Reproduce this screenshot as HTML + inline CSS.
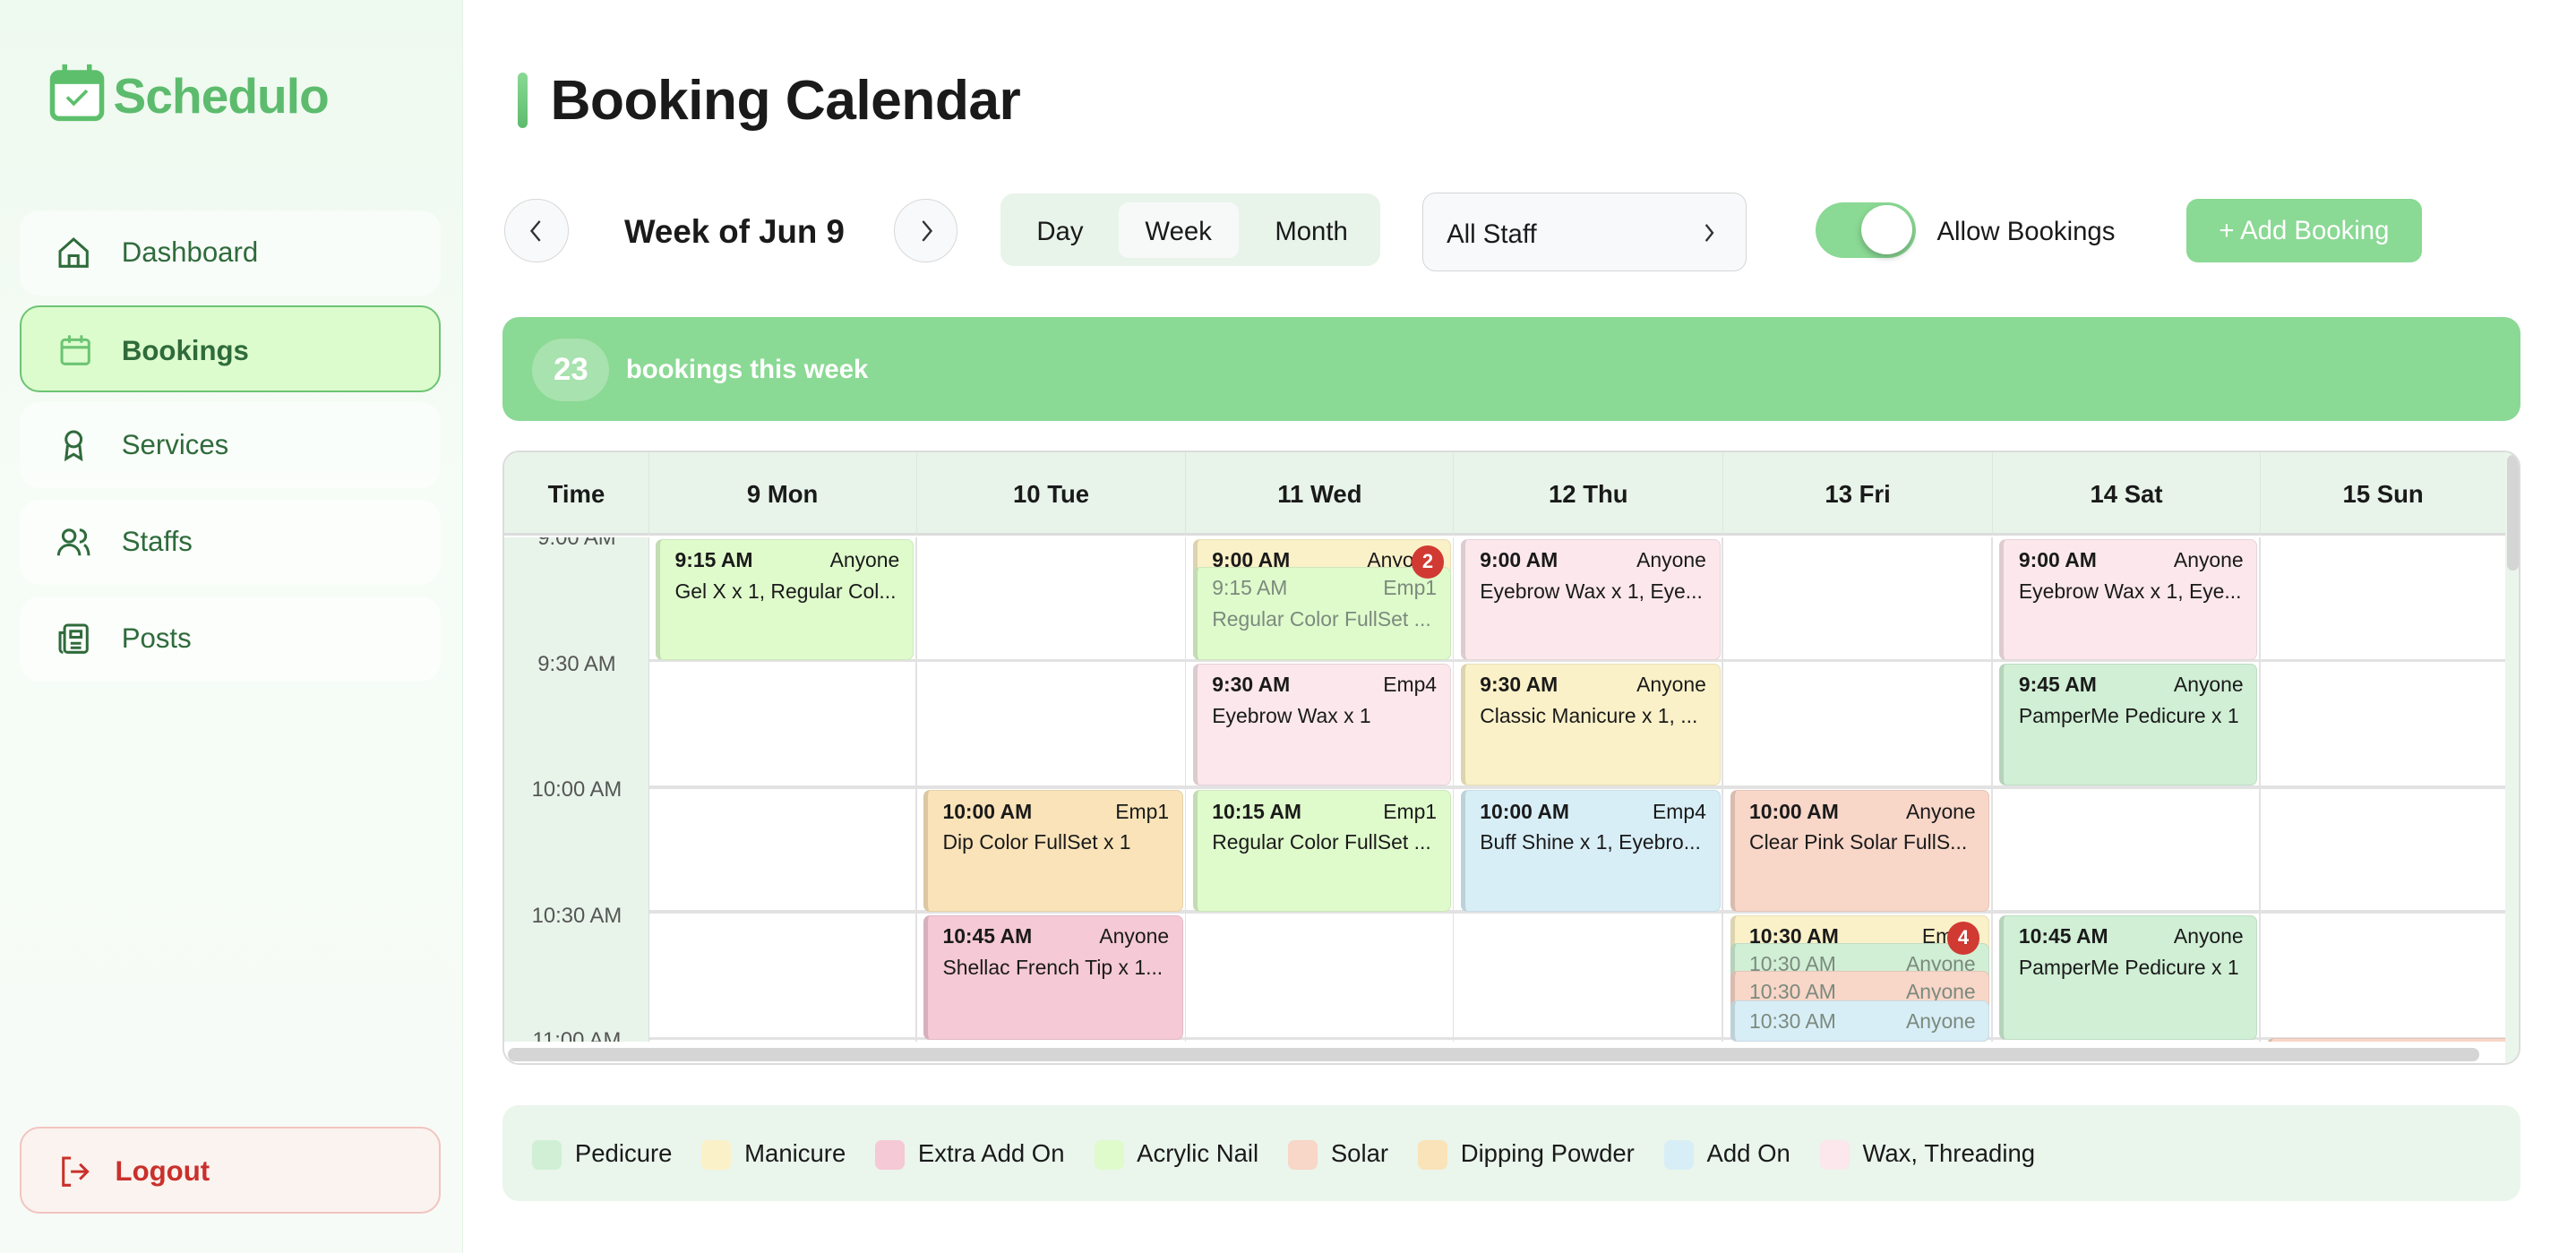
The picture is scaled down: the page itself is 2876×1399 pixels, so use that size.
<!DOCTYPE html>
<html><head><meta charset="utf-8"><style>
*{box-sizing:border-box;margin:0;padding:0}
html,body{width:2876px;height:1398px;overflow:hidden;background:#fff}
#w{position:absolute;left:0;top:0;width:1568px;height:763px;zoom:1.83418;font-family:"Liberation Sans",sans-serif;color:#1a1a1a;overflow:hidden}
.a{position:absolute}
.side{left:0;top:0;width:282px;height:763px;background:linear-gradient(180deg,#eef9ef 0%,#f6fcf6 40%,#f7fbf7 100%);border-right:1px solid #e3f2e5}
.nav{left:12px;width:256px;height:52px;border-radius:12px;background:rgba(255,255,255,.5);font-size:17px;color:#2f6b3b}
.nav span{position:absolute;left:62px;top:16px}
.nav svg{position:absolute;left:22px;top:15px}
.ev{position:absolute;border-radius:4px;border:1px solid rgba(0,0,0,.08);border-left:3px solid rgba(0,0,0,.12);padding:5px 8px 0 9px;font-size:12.5px;overflow:hidden}
.ev b{display:block;font-weight:bold;font-size:12.5px;height:17px}
.ev b i{font-style:normal;font-weight:normal;float:right}
.ev div{margin-top:2px;white-space:nowrap}
.f{color:#7c8a7e}.f b{font-weight:normal}
.badge{position:absolute;width:20px;height:20px;border-radius:50%;background:#d03a32;color:#fff;font-size:12px;font-weight:bold;text-align:center;line-height:20px}
.hd{position:absolute;top:0;height:51px;line-height:51px;text-align:center;font-size:15px;font-weight:bold;border-right:1px solid #dde6de}
.tl{position:absolute;left:0;width:88px;text-align:center;font-size:13px;color:#555}
.lg{display:inline-block;width:18px;height:18px;border-radius:4px;vertical-align:middle;margin-right:8px}
.li{display:inline-block;margin-right:18px;font-size:15px}
</style></head><body><div id="w">
<div class="a side"></div>
<svg class="a" style="left:29px;top:38px" width="36" height="36" viewBox="0 0 36 36"><rect x="3" y="6" width="30" height="28" rx="4" fill="#fff" stroke="#5dbf6c" stroke-width="3"/><rect x="3" y="6" width="30" height="7" fill="#5dbf6c"/><rect x="9" y="1" width="3" height="8" fill="#5dbf6c"/><rect x="24" y="1" width="3" height="8" fill="#5dbf6c"/><path d="M12 21l4 4 8-8" stroke="#5dbf6c" stroke-width="2" fill="none"/></svg>
<div class="a" style="left:69px;top:41px;font-size:30px;font-weight:bold;color:#5dbb6e;letter-spacing:-0.5px">Schedulo</div>
<div class="a nav" style="top:128px"><svg width="22" height="22" viewBox="0 0 24 24" fill="none" stroke="#2f6b3b" stroke-width="1.8"><path d="M3 11l9-8 9 8v10H3z"/><path d="M9 21v-7h6v7"/></svg><span>Dashboard</span></div>
<div class="a nav" style="top:186px;background:#ddfccd;border:1.5px solid #6cc474;height:53px"><svg width="22" height="22" viewBox="0 0 24 24" fill="none" stroke="#6cc474" stroke-width="1.8"><rect x="3" y="5" width="18" height="16" rx="2"/><path d="M3 10h18M8 2v5M16 2v5"/></svg><span style="font-weight:bold;left:61px;top:17px">Bookings</span></div>
<div class="a nav" style="top:245px"><svg width="22" height="22" viewBox="0 0 24 24" fill="none" stroke="#2f6b3b" stroke-width="1.8"><circle cx="12" cy="8" r="5"/><path d="M8 12l-1 9 5-3 5 3-1-9"/></svg><span>Services</span></div>
<div class="a nav" style="top:304px"><svg width="22" height="22" viewBox="0 0 24 24" fill="none" stroke="#2f6b3b" stroke-width="1.8"><circle cx="9" cy="8" r="4"/><path d="M2 21c0-4 3-7 7-7s7 3 7 7M16 4a4 4 0 010 8M19 14c2 1 3 4 3 7"/></svg><span>Staffs</span></div>
<div class="a nav" style="top:363px"><svg width="22" height="22" viewBox="0 0 24 24" fill="none" stroke="#2f6b3b" stroke-width="1.8"><rect x="6" y="3" width="15" height="18" rx="2"/><path d="M6 8H3v11a2 2 0 002 2M10 7h7v4h-7zM10 15h7M10 18h7"/></svg><span>Posts</span></div>
<div class="a" style="left:12px;top:686px;width:256px;height:53px;border-radius:12px;border:1.5px solid #f2c4c0;background:#fbf3ef;color:#c9302c;font-size:17px;font-weight:bold"><svg class="a" style="left:22px;top:15px" width="22" height="22" viewBox="0 0 24 24" fill="none" stroke="#c9302c" stroke-width="1.8"><path d="M9 3H4v18h5M15 7l5 5-5 5M20 12H9"/></svg><span class="a" style="left:57px;top:16px">Logout</span></div>

<div class="a" style="left:315px;top:44px;width:6px;height:34px;border-radius:3px;background:linear-gradient(#8ad994,#5dbb6e)"></div>
<div class="a" style="left:335px;top:42px;font-size:34px;font-weight:bold;letter-spacing:-0.3px">Booking Calendar</div>

<div class="a" style="left:307px;top:121px;width:39px;height:39px;border-radius:50%;border:1px solid #d8d8d8;background:#f8f9fa"><svg class="a" style="left:13px;top:12px" width="12" height="14" viewBox="0 0 12 14" fill="none" stroke="#333" stroke-width="1.3"><path d="M8 1L3 7l5 6"/></svg></div>
<div class="a" style="left:380px;top:130px;font-size:20px;font-weight:bold">Week of Jun 9</div>
<div class="a" style="left:544px;top:121px;width:39px;height:39px;border-radius:50%;border:1px solid #d8d8d8;background:#f8f9fa"><svg class="a" style="left:13px;top:12px" width="12" height="14" viewBox="0 0 12 14" fill="none" stroke="#333" stroke-width="1.3"><path d="M4 1l5 6-5 6"/></svg></div>
<div class="a" style="left:609px;top:118px;width:231px;height:44px;border-radius:8px;background:#e8f4ea;font-size:16px">
<span class="a" style="left:22px;top:14px">Day</span>
<div class="a" style="left:72px;top:5px;width:73px;height:34px;border-radius:6px;background:#f7f9f9"></div>
<span class="a" style="left:88px;top:14px">Week</span>
<span class="a" style="left:167px;top:14px">Month</span></div>
<div class="a" style="left:866px;top:117px;width:197px;height:48px;border-radius:8px;border:1px solid #d6d6d6;background:#f7f9fa;font-size:16px"><span class="a" style="left:14px;top:16px">All Staff</span><svg class="a" style="left:170px;top:18px" width="8" height="12" viewBox="0 0 8 12" fill="none" stroke="#333" stroke-width="1.3"><path d="M2 1l4 5-4 5"/></svg></div>
<div class="a" style="left:1105px;top:123px;width:61px;height:34px;border-radius:17px;background:#8ad994"></div>
<div class="a" style="left:1133px;top:125px;width:31px;height:30px;border-radius:50%;background:#fff;box-shadow:0 2px 4px rgba(0,0,0,.25)"></div>
<div class="a" style="left:1179px;top:132px;font-size:16px">Allow Bookings</div>
<div class="a" style="left:1331px;top:121px;width:143px;height:39px;border-radius:7px;background:#8ad994;color:#fff;font-size:16px;text-align:center;line-height:39px">+ Add Booking</div>

<div class="a" style="left:306px;top:193px;width:1228px;height:63px;border-radius:10px;background:#8ad994"></div>
<div class="a" style="left:324px;top:206px;width:47px;height:38px;border-radius:19px;background:#a8e2ae;color:#fff;font-size:19px;font-weight:bold;text-align:center;line-height:38px">23</div>
<div class="a" style="left:381px;top:216px;color:#fff;font-size:16px;font-weight:bold">bookings this week</div>

<div class="a" style="left:306px;top:274px;width:1228px;height:374px;border:1.5px solid #dcdcdc;border-radius:10px;overflow:hidden;background:#fff">
 <div class="a" style="left:0;top:0;width:1228px;height:51px;background:#e8f4ea;border-bottom:2px solid #dcdcdc"></div>
 <div class="hd" style="left:0;width:88px">Time</div>
 <div class="hd" style="left:88px;width:163px">9 Mon</div>
 <div class="hd" style="left:251px;width:164px">10 Tue</div>
 <div class="hd" style="left:415px;width:163px">11 Wed</div>
 <div class="hd" style="left:578px;width:164px">12 Thu</div>
 <div class="hd" style="left:742px;width:164px">13 Fri</div>
 <div class="hd" style="left:906px;width:163px">14 Sat</div>
 <div class="hd" style="left:1069px;width:149px;border:none">15 Sun</div>
 <div class="a" style="left:1218px;top:0;width:10px;height:374px;background:#eaf5ec"></div>
 <div class="a" style="left:1219px;top:2px;width:7px;height:70px;border-radius:4px;background:#d5d5d5"></div>
 <div class="a" style="left:0;top:52px;width:1218px;height:307px;overflow:hidden">
  <div class="a" style="left:0;top:0;width:88px;height:307px;background:#e8f4ea;border-right:1px solid #dcdcdc"></div>
  <div class="tl" style="top:-7px">9:00 AM</div>
  <div class="tl" style="top:70px">9:30 AM</div>
  <div class="tl" style="top:146px">10:00 AM</div>
  <div class="tl" style="top:223px">10:30 AM</div>
  <div class="tl" style="top:299px">11:00 AM</div>
  <div class="a" style="left:88px;top:74px;width:1130px;height:2px;background:#e2e2e2"></div>
  <div class="a" style="left:88px;top:151px;width:1130px;height:2px;background:#e2e2e2"></div>
  <div class="a" style="left:88px;top:227px;width:1130px;height:2px;background:#e2e2e2"></div>
  <div class="a" style="left:88px;top:304px;width:1130px;height:2px;background:#e2e2e2"></div>
  <div class="a" style="left:250px;top:0;width:1px;height:307px;background:#e2e2e2"></div>
  <div class="a" style="left:414px;top:0;width:1px;height:307px;background:#e2e2e2"></div>
  <div class="a" style="left:577px;top:0;width:1px;height:307px;background:#e2e2e2"></div>
  <div class="a" style="left:741px;top:0;width:1px;height:307px;background:#e2e2e2"></div>
  <div class="a" style="left:905px;top:0;width:1px;height:307px;background:#e2e2e2"></div>
  <div class="a" style="left:1068px;top:0;width:1px;height:307px;background:#e2e2e2"></div>
  <!-- Mon -->
  <div class="ev" style="left:92px;top:1px;width:157px;height:74px;background:#dffbcc"><b>9:15 AM<i>Anyone</i></b><div>Gel X x 1, Regular Col...</div></div>
  <!-- Tue -->
  <div class="ev" style="left:255px;top:154px;width:158px;height:74px;background:#fae3b8"><b>10:00 AM<i>Emp1</i></b><div>Dip Color FullSet x 1</div></div>
  <div class="ev" style="left:255px;top:230px;width:158px;height:76px;background:#f5c9d6"><b>10:45 AM<i>Anyone</i></b><div>Shellac French Tip x 1...</div></div>
  <!-- Wed -->
  <div class="ev" style="left:419px;top:1px;width:157px;height:74px;background:#fbf1c8"><b>9:00 AM<i>Anyone</i></b></div>
  <div class="ev f" style="left:419px;top:18px;width:157px;height:57px;background:#dffbcc"><b>9:15 AM<i>Emp1</i></b><div>Regular Color FullSet ...</div></div>
  <div class="badge" style="left:552px;top:5px">2</div>
  <div class="ev" style="left:419px;top:77px;width:157px;height:74px;background:#fbe7ec"><b>9:30 AM<i>Emp4</i></b><div>Eyebrow Wax x 1</div></div>
  <div class="ev" style="left:419px;top:154px;width:157px;height:74px;background:#dffbcc"><b>10:15 AM<i>Emp1</i></b><div>Regular Color FullSet ...</div></div>
  <!-- Thu -->
  <div class="ev" style="left:582px;top:1px;width:158px;height:74px;background:#fbe7ec"><b>9:00 AM<i>Anyone</i></b><div>Eyebrow Wax x 1, Eye...</div></div>
  <div class="ev" style="left:582px;top:77px;width:158px;height:74px;background:#fbf1c8"><b>9:30 AM<i>Anyone</i></b><div>Classic Manicure x 1, ...</div></div>
  <div class="ev" style="left:582px;top:154px;width:158px;height:74px;background:#d8eef7"><b>10:00 AM<i>Emp4</i></b><div>Buff Shine x 1, Eyebro...</div></div>
  <!-- Fri -->
  <div class="ev" style="left:746px;top:154px;width:158px;height:74px;background:#f8d6c8"><b>10:00 AM<i>Anyone</i></b><div>Clear Pink Solar FullS...</div></div>
  <div class="ev" style="left:746px;top:230px;width:158px;height:77px;background:#fbf1c8"><b>10:30 AM<i>Emp4</i></b></div>
  <div class="ev f" style="left:746px;top:247px;width:158px;height:60px;background:#d0efd5"><b>10:30 AM<i>Anyone</i></b></div>
  <div class="ev f" style="left:746px;top:264px;width:158px;height:43px;background:#f8d6c8"><b>10:30 AM<i>Anyone</i></b></div>
  <div class="ev f" style="left:746px;top:282px;width:158px;height:25px;background:#d8eef7"><b>10:30 AM<i>Anyone</i></b></div>
  <div class="badge" style="left:878px;top:234px">4</div>
  <!-- Sat -->
  <div class="ev" style="left:910px;top:1px;width:157px;height:74px;background:#fbe7ec"><b>9:00 AM<i>Anyone</i></b><div>Eyebrow Wax x 1, Eye...</div></div>
  <div class="ev" style="left:910px;top:77px;width:157px;height:74px;background:#d0efd5"><b>9:45 AM<i>Anyone</i></b><div>PamperMe Pedicure x 1</div></div>
  <div class="ev" style="left:910px;top:230px;width:157px;height:76px;background:#d0efd5"><b>10:45 AM<i>Anyone</i></b><div>PamperMe Pedicure x 1</div></div>
  <!-- Sun -->
  <div class="ev" style="left:1073px;top:305px;width:150px;height:20px;background:#f8d6c8"></div>
 </div>
 <div class="a" style="left:0;top:361px;width:1218px;height:12px;background:#fff"></div>
 <div class="a" style="left:2px;top:363px;width:1200px;height:8px;border-radius:4px;background:#d5d5d5"></div>
</div>

<div class="a" style="left:306px;top:673px;width:1228px;height:58px;border-radius:10px;background:#eaf5ec;padding:20px 0 0 18px;white-space:nowrap">
<span class="li"><span class="lg" style="background:#d0efd5"></span>Pedicure</span><span class="li"><span class="lg" style="background:#fbf1c8"></span>Manicure</span><span class="li"><span class="lg" style="background:#f5c9d6"></span>Extra Add On</span><span class="li"><span class="lg" style="background:#dffbcc"></span>Acrylic Nail</span><span class="li"><span class="lg" style="background:#f8d6c8"></span>Solar</span><span class="li"><span class="lg" style="background:#fae3b8"></span>Dipping Powder</span><span class="li"><span class="lg" style="background:#d8eef7"></span>Add On</span><span class="li"><span class="lg" style="background:#fbe7ec"></span>Wax, Threading</span>
</div>
</div></body></html>
